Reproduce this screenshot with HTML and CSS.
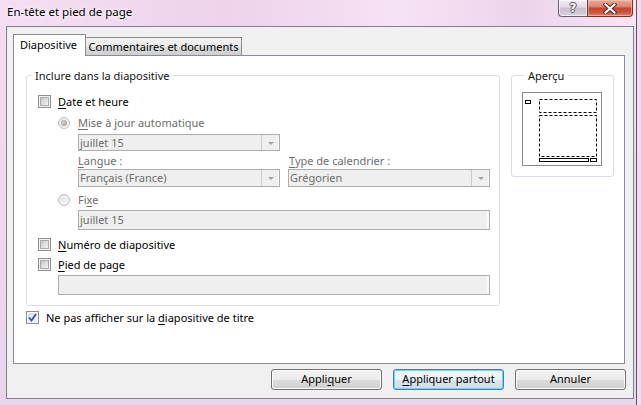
FILE: index.html
```html
<!DOCTYPE html>
<html lang="fr">
<head>
<meta charset="utf-8">
<title>En-tête et pied de page</title>
<link rel="stylesheet" href="styles.css">
</head>
<body>
<div class="window">
  <div class="titlebar">
    <span class="title">En-tête et pied de page</span>
    <div class="caption-buttons">
      <div class="cap help"><span class="qmark">?</span></div>
      <div class="cap close">
        <svg width="14" height="11" viewBox="0 0 14 11">
          <path d="M2.5 1.5 L11.5 9.5 M11.5 1.5 L2.5 9.5" stroke="#5a2a22" stroke-width="4" stroke-linecap="square"/>
          <path d="M2.5 1.5 L11.5 9.5 M11.5 1.5 L2.5 9.5" stroke="#ffffff" stroke-width="2" stroke-linecap="square"/>
        </svg>
      </div>
    </div>
  </div>
  <div class="client">
    <div class="tabs">
      <div class="tab active">Diapositive</div>
      <div class="tab other">Commentaires et documents</div>
    </div>
    <div class="panel">
      <div class="groups">
        <fieldset class="group main">
          <legend>Inclure dans la diapositive</legend>
          <div class="fs-body">
            <div class="opt r-date"><span class="check"><span class="box"></span></span><span><u>D</u>ate et heure</span></div>
            <div class="opt sub r-auto disabled"><span class="radio on"></span><span><u>M</u>ise à jour automatique</span></div>
            <div class="combo c-date"><span class="val">juillet 15</span><span class="arrow"></span></div>
            <div class="pair r-labels disabled">
              <span><u>L</u>angue :</span>
              <span class="lbl2"><u>T</u>ype de calendrier :</span>
            </div>
            <div class="pair r-combos">
              <div class="combo"><span class="val">Français (France)</span><span class="arrow"></span></div>
              <div class="combo"><span class="val">Grégorien</span><span class="arrow"></span></div>
            </div>
            <div class="opt sub r-fixe disabled"><span class="radio"></span><span>Fi<u>x</u>e</span></div>
            <div class="field f-fixe">juillet 15</div>
            <div class="opt r-num"><span class="check"><span class="box"></span></span><span><u>N</u>uméro de diapositive</span></div>
            <div class="opt r-pied"><span class="check"><span class="box"></span></span><span><u>P</u>ied de page</span></div>
            <div class="field f-pied"></div>
          </div>
        </fieldset>
        <fieldset class="group preview">
          <legend>Aperçu</legend>
          <svg class="thumb" width="80" height="74" viewBox="0 0 80 74">
            <rect x="0.5" y="0.5" width="79" height="73" fill="#fff" stroke="#8a8a8a"/>
            <rect x="3.5" y="8.5" width="5" height="3" fill="none" stroke="#000"/>
            <rect x="17.5" y="7.5" width="57" height="13" fill="none" stroke="#000" stroke-dasharray="3 2"/>
            <rect x="17.5" y="23.5" width="57" height="41" fill="none" stroke="#000" stroke-dasharray="3 2"/>
            <rect x="17.5" y="66.5" width="49" height="3" fill="none" stroke="#000"/>
            <rect x="68.5" y="66.5" width="6" height="3" fill="none" stroke="#000"/>
          </svg>
        </fieldset>
      </div>
      <div class="opt r-titre">
        <span class="check checked">
          <svg width="9" height="9" viewBox="0 0 9 9"><path d="M1 4.5 L3.5 7.5 L8 1" fill="none" stroke="#3c4f9c" stroke-width="1.8"/></svg>
        </span>
        <span>Ne pas afficher sur la <u>d</u>iapositive de titre</span>
      </div>
    </div>
    <div class="buttons">
      <div class="btn">Appli<u>q</u>uer</div>
      <div class="btn default"><u>A</u>ppliquer partout</div>
      <div class="btn">Annuler</div>
    </div>
  </div>
</div>
</body>
</html>
```

FILE: styles.css
```css
* { box-sizing: border-box; }
html, body { margin: 0; padding: 0; }
body {
  width: 641px;
  height: 405px;
  overflow: hidden;
  font-family: "Noto Sans", "DejaVu Sans", sans-serif;
  font-size: 11px;
  line-height: 15px;
  color: #000;
  background: #f3dcef;
}
u { text-decoration: underline; text-underline-offset: 2px; }

.window {
  width: 637px;
  height: 405px;
  border-right: 1px solid #5e5466;
  display: flex;
  flex-direction: column;
  background: linear-gradient(180deg, #f4ddf0 0%, #efd9ee 40%, #e9d5ec 100%);
}
.titlebar {
  height: 26px;
  flex: none;
  display: flex;
  justify-content: space-between;
  align-items: flex-start;
  padding-left: 7px;
  background: linear-gradient(90deg, #f5dff2 0%, #f1d8ee 20%, #eed3eb 35%, #f2daef 50%, #f6e3f4 62%, #f3dbf0 72%, #ecd4ea 82%, #f7e5f5 100%);
}
.title { margin-top: 4px; font-size: 11.5px; color: #000; text-shadow: 0 0 6px #fff, 0 0 3px #fff; }
.caption-buttons { display: flex; margin-right: 3px; }
.cap {
  height: 17px;
  display: flex;
  align-items: center;
  justify-content: center;
  border: 1px solid #6f5c6f;
  border-top: none;
}
.help {
  width: 29px;
  border-right: none;
  border-radius: 0 0 0 4px;
  background: linear-gradient(180deg, #f3eef4 0%, #e2d8e4 45%, #cbbfcd 50%, #d9cfdc 100%);
  box-shadow: inset 0 0 0 1px rgba(255,255,255,0.6);
}
.qmark {
  font-family: "DejaVu Sans", sans-serif;
  font-size: 12px;
  font-weight: bold;
  color: #fff;
  line-height: 12px;
  margin-top: -1px;
  text-shadow: 1px 0 0 #4e4e5a, -1px 0 0 #4e4e5a, 0 1px 0 #4e4e5a, 0 -1px 0 #4e4e5a;
}
.close {
  width: 46px;
  border-radius: 0 0 4px 0;
  border-color: #7a3126;
  background: linear-gradient(180deg, #e9a99a 0%, #dc8772 40%, #c5452e 52%, #cc5a42 80%, #de8d76 100%);
  box-shadow: inset 0 0 0 1px rgba(255,210,200,0.5);
}
.close svg { display: block; }

.client {
  flex: none;
  margin-left: 6px;
  margin-right: 2px;
  height: 373px;
  border: 1px solid #858087;
  background: #f0f0f0;
  padding: 7px 7px 0 6px;
}

.tabs {
  display: flex;
  align-items: flex-end;
  height: 21px;
  position: relative;
  z-index: 1;
}
.tab {
  border: 1px solid #898c95;
  border-bottom: none;
  text-align: center;
}
.tab.active {
  width: 73px;
  height: 22px;
  margin-bottom: -1px;
  background: #fff;
  line-height: 20px;
  padding-right: 2px;
}
.tab.other {
  width: 157px;
  height: 18px;
  margin-left: -1px;
  line-height: 17px;
  background: linear-gradient(180deg, #f2f2f2 0%, #ebebeb 50%, #dddddd 51%, #cfcfcf 100%);
}

.panel {
  margin-right: 1px;
  height: 309px;
  border: 1px solid #898c95;
  background: #fff;
  padding: 12px 0 0 12px;
}
.groups {
  display: flex;
  align-items: flex-start;
  gap: 11px;
}
.group {
  margin: 0;
  padding: 0;
  min-width: 0;
  border: 1px solid #d5dfe5;
  border-radius: 3px;
}
.group legend {
  padding: 0 4px;
  margin-left: 4px;
  line-height: 15px;
  color: #151515;
}
.main { width: 474px; }
.fs-body { padding: 0 0 10px 11px; }
.preview { width: 103px; padding: 9px 0 10px 10px; }
.preview legend { margin-left: 2px; padding: 0 4px; }
.thumb { display: block; }

.opt {
  display: flex;
  align-items: center;
  height: 15px;
  gap: 7px;
}
.opt.sub { margin-left: 20px; gap: 8px; }
.disabled { color: #6d6d6d; }

.r-date { margin-top: 11px; }
.r-auto { margin-top: 6px; }
.c-date { margin-top: 4px; margin-left: 40px; width: 202px; height: 17px; }
.r-labels { margin-top: 2px; height: 15px; }
.r-combos { margin-top: 1px; }
.r-combos .combo { height: 18px; }
.r-fixe { margin-top: 5px; }
.f-fixe { margin-top: 3px; margin-left: 40px; width: 412px; }
.r-num { margin-top: 7px; }
.r-pied { margin-top: 5px; }
.f-pied { margin-top: 3px; margin-left: 20px; width: 432px; }
.r-titre { margin-top: 4px; }

.pair {
  display: grid;
  grid-template-columns: 202px 202px;
  column-gap: 8px;
  margin-left: 40px;
}
.lbl2 { padding-left: 1px; }

.check {
  flex: none;
  width: 13px;
  height: 13px;
  border: 1px solid #8e8f8f;
  background: #f4f4f4;
  padding: 1px;
  display: flex;
  align-items: center;
  justify-content: center;
}
.check .box {
  display: block;
  width: 9px;
  height: 9px;
  border: 1px solid #a9abad;
  background: linear-gradient(135deg, #c3c5c8 0%, #dcdde0 50%, #f4f4f4 100%);
}
.check.checked {
  background: linear-gradient(135deg, #dcdfe4 0%, #f2f3f5 100%);
  box-shadow: inset 0 0 0 1px #f8f8f8;
}
.check.checked svg { display: block; }

.radio {
  flex: none;
  width: 12px;
  height: 12px;
  border-radius: 50%;
  border: 1px solid #bdbdbd;
  background: radial-gradient(circle at 35% 35%, #e6e6e6 0%, #f4f4f4 70%);
  display: flex;
  align-items: center;
  justify-content: center;
}
.radio.on::before {
  content: "";
  width: 6px;
  height: 6px;
  border-radius: 50%;
  background: radial-gradient(circle at 40% 40%, #d0d0d0 0%, #a8a8a8 70%, #9a9a9a 100%);
}

.combo {
  display: flex;
  border: 1px solid #adadad;
  background: #efefef;
  color: #6d6d6d;
  box-shadow: inset -1px 0 0 #fafafa;
}
.combo .val {
  flex: 1;
  padding-left: 1px;
  line-height: 15px;
  white-space: nowrap;
  overflow: hidden;
}
.combo .arrow {
  flex: none;
  width: 18px;
  border-left: 1px solid #cacaca;
  display: flex;
  align-items: center;
  justify-content: center;
}
.combo .arrow::before {
  content: "";
  width: 0;
  height: 0;
  border-left: 3px solid transparent;
  border-right: 3px solid transparent;
  border-top: 3px solid #a3a3a3;
  margin-top: 1px;
}

.field {
  height: 20px;
  border: 1px solid #adadad;
  background: #efefef;
  color: #6d6d6d;
  padding-left: 1px;
  line-height: 17px;
  box-shadow: inset -2px 0 0 #fbfbfb;
}

.buttons {
  display: flex;
  justify-content: flex-end;
  gap: 11px;
  margin-top: 5px;
}
.btn {
  width: 111px;
  height: 21px;
  border: 1px solid #707070;
  border-radius: 3px;
  text-align: center;
  line-height: 18px;
  background: linear-gradient(180deg, #f2f2f2 0%, #ebebeb 50%, #dddddd 51%, #cfcfcf 100%);
  box-shadow: inset 0 0 0 1px #fbfbfb;
}
.btn.default {
  border-color: #3c7fb1;
  box-shadow: inset 0 0 0 1px #6fd3f7;
  background: linear-gradient(180deg, #f1f7fb 0%, #e8f1f7 50%, #d9e6ef 51%, #cfdde8 100%);
}
```
